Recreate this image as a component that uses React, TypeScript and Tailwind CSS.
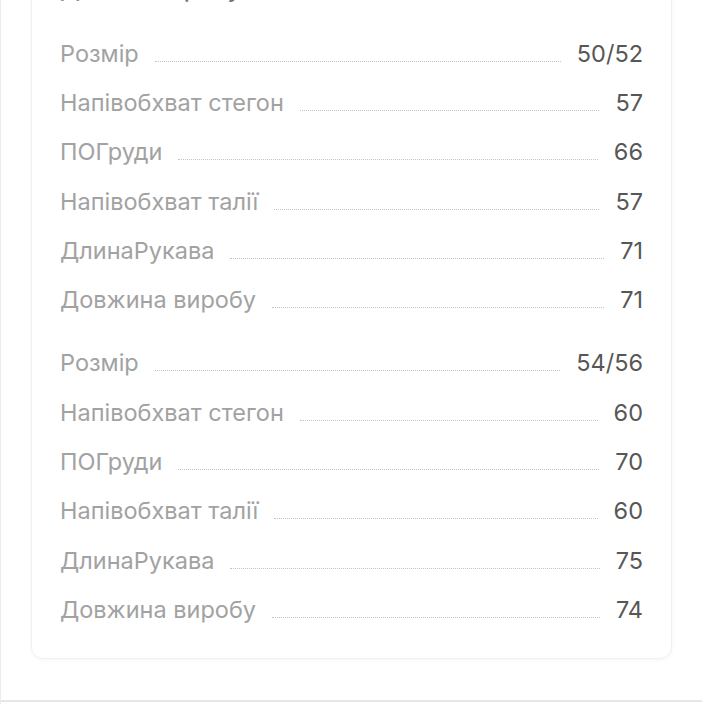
const groups = [
  [
    { label: "Розмір", value: "50/52" },
    { label: "Напівобхват стегон", value: "57" },
    { label: "ПОГруди", value: "66" },
    { label: "Напівобхват талії", value: "57" },
    { label: "ДлинаРукава", value: "71" },
    { label: "Довжина виробу", value: "71" },
  ],
  [
    { label: "Розмір", value: "54/56" },
    { label: "Напівобхват стегон", value: "60" },
    { label: "ПОГруди", value: "70" },
    { label: "Напівобхват талії", value: "60" },
    { label: "ДлинаРукава", value: "75" },
    { label: "Довжина виробу", value: "74" },
  ],
];

export default function App() {
  return (
    <div className="min-h-[704px] overflow-hidden bg-white border-l border-[#ececec] font-['Inter','Noto_Sans',sans-serif]">
      <div className="-mt-[52px] pl-[30px] pr-[30px] pb-[41px]">
        {/* Size card */}
        <div className="rounded-xl border border-[#f0f0f0] bg-white px-[28px] pt-[24px] pb-[23px] shadow-[0_1px_4px_rgba(0,0,0,0.04)]">
          <h3 className="mb-[24px] text-[24px] leading-[32px] font-medium text-[#777]">
            Дані по виробу
          </h3>
          <div className="flex flex-col gap-[14px]">
            {groups.map((rows, gi) => (
              <div key={gi}>
                {rows.map((row, idx) => (
                  <div key={idx} className="flex h-[49.3px] items-center">
                    <div className="flex w-full items-baseline">
                      <span className="text-[23.5px] leading-[28px] text-[#a2a2a2] whitespace-nowrap">
                        {row.label}
                      </span>
                      <div className="mx-4 h-px flex-1 border-b border-dotted border-[#c4c4c4]" />
                      <span className="text-[23.5px] leading-[28px] text-[#575757] whitespace-nowrap">
                        {row.value}
                      </span>
                    </div>
                  </div>
                ))}
              </div>
            ))}
          </div>
        </div>
      </div>
      <div className="border-t-2 border-[#e7e7e7] h-[4px]" />
    </div>
  );
}
